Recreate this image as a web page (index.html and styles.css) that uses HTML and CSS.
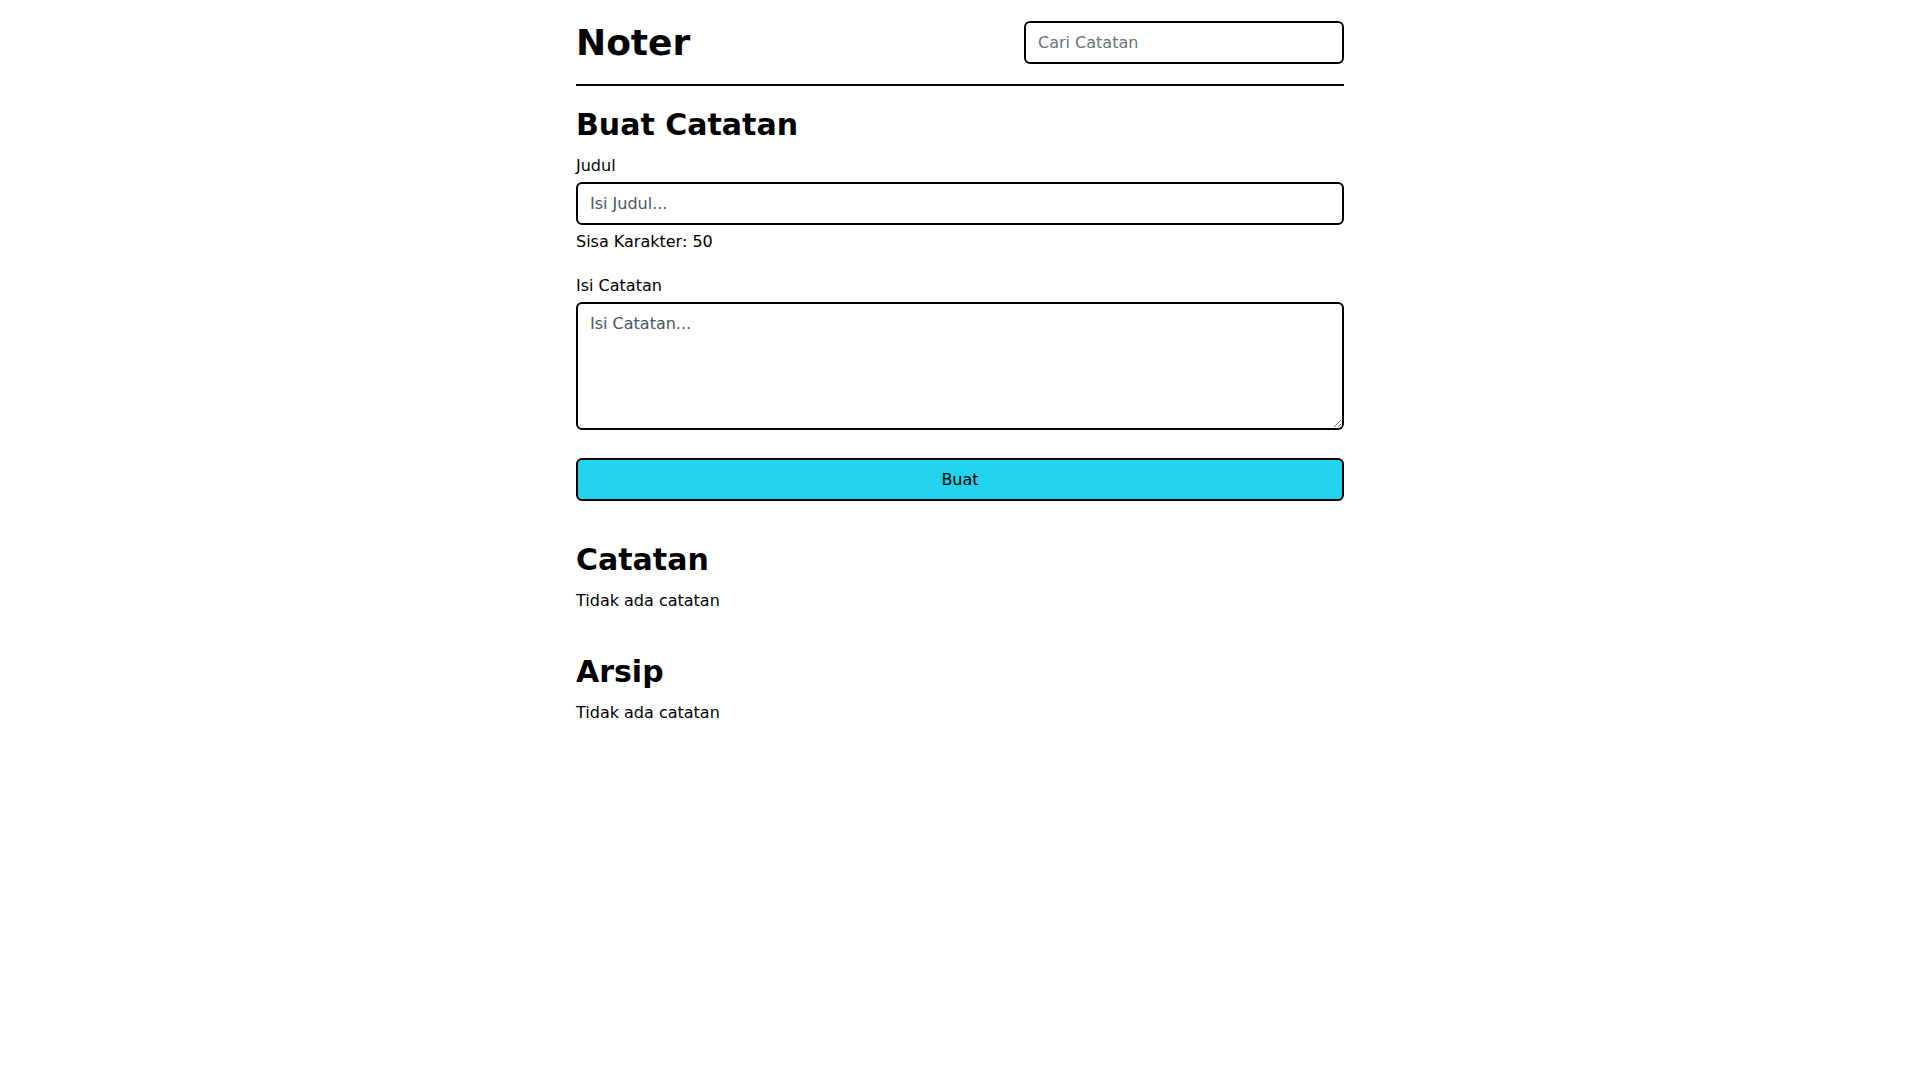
FILE: index.html
```html
<!DOCTYPE html>
<html lang="id">
<head>
<meta charset="utf-8">
<title>Noter</title>
<link rel="stylesheet" href="styles.css">
</head>
<body>
<div class="container">
  <header class="header">
    <h1 class="brand">Noter</h1>
    <input class="search" type="text" placeholder="Cari Catatan">
  </header>
  <main>
    <section class="create">
      <h2 class="section-title">Buat Catatan</h2>
      <form class="form">
        <div class="field">
          <label class="label" for="judul">Judul</label>
          <input id="judul" class="input" type="text" placeholder="Isi Judul...">
          <p class="counter">Sisa Karakter: 50</p>
        </div>
        <div class="field">
          <label class="label" for="isi">Isi Catatan</label>
          <textarea id="isi" class="textarea" placeholder="Isi Catatan..."></textarea>
        </div>
        <button class="btn" type="button">Buat</button>
      </form>
    </section>
    <section class="list">
      <h2 class="section-title">Catatan</h2>
      <p class="empty">Tidak ada catatan</p>
    </section>
    <section class="list">
      <h2 class="section-title">Arsip</h2>
      <p class="empty">Tidak ada catatan</p>
    </section>
  </main>
</div>
</body>
</html>
```

FILE: styles.css
```css
* { box-sizing: border-box; }
html, body { margin: 0; padding: 0; background: #fff; }
body {
  font-family: "DejaVu Sans", sans-serif;
  font-size: 16px;
  line-height: 1.5;
  color: #000;
}
.container {
  width: 768px;
  margin: 0 auto;
}
.header {
  display: flex;
  justify-content: space-between;
  align-items: center;
  padding: 21px 0 20px;
  border-bottom: 2px solid #000;
}
.brand {
  margin: 0;
  font-size: 36px;
  line-height: 40px;
  font-weight: 700;
}
.search {
  width: 320px;
  height: 43px;
  padding: 0 12px;
  border: 2px solid #000;
  border-radius: 6px;
  font-family: inherit;
  font-size: 16px;
  color: #000;
  outline: none;
}
.search::placeholder { color: #6b7280; }
.section-title {
  margin: 0;
  font-size: 30px;
  line-height: 36px;
  font-weight: 700;
}
.create { padding-top: 21px; }
.form {
  display: flex;
  flex-direction: column;
  gap: 20px;
  margin-top: 11px;
}
.field {
  display: flex;
  flex-direction: column;
}
.label {
  display: block;
  margin-bottom: 4px;
}
.input, .textarea {
  width: 100%;
  border: 2px solid #000;
  border-radius: 6px;
  font-family: inherit;
  font-size: 16px;
  color: #000;
  padding: 8px 12px;
  outline: none;
}
.input { height: 43px; }
.textarea {
  height: 128px;
  line-height: 1.5;
  resize: vertical;
  display: block;
}
.input::placeholder, .textarea::placeholder { color: #4b5563; }
.counter { margin: 5px 0 0; }
.btn {
  margin-top: 8px;
  width: 100%;
  height: 43px;
  border: 2px solid #000;
  border-radius: 6px;
  background: #22d3ee;
  font-family: inherit;
  font-size: 16px;
  color: #000;
  cursor: pointer;
}
.list { margin-top: 41px; }
.list .empty { margin: 11px 0 0; }
```
